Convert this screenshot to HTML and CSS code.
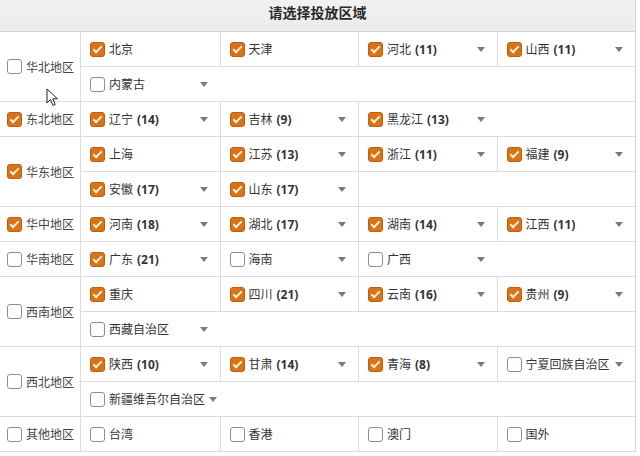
FILE: index.html
```html
<!DOCTYPE html>
<html lang="zh">
<head>
<meta charset="utf-8">
<title>请选择投放区域</title>
<link rel="stylesheet" href="styles.css">
</head>
<body>
<div class="panel">
  <div class="title">请选择投放区域</div>

  <div class="group">
    <div class="region"><span class="cb"></span>华北地区</div>
    <div class="rows">
      <div class="row">
        <div class="cell"><span class="cb on"></span>北京</div>
        <div class="cell"><span class="cb on"></span>天津</div>
        <div class="cell"><span class="cb on"></span>河北 <b>(11)</b><i class="dd"></i></div>
        <div class="cell"><span class="cb on"></span>山西 <b>(11)</b><i class="dd"></i></div>
      </div>
      <div class="row">
        <div class="cell"><span class="cb"></span>内蒙古<i class="dd"></i></div>
      </div>
    </div>
  </div>

  <div class="group">
    <div class="region"><span class="cb on"></span>东北地区</div>
    <div class="rows">
      <div class="row">
        <div class="cell"><span class="cb on"></span>辽宁 <b>(14)</b><i class="dd"></i></div>
        <div class="cell"><span class="cb on"></span>吉林 <b>(9)</b><i class="dd"></i></div>
        <div class="cell"><span class="cb on"></span>黑龙江 <b>(13)</b><i class="dd"></i></div>
      </div>
    </div>
  </div>

  <div class="group">
    <div class="region"><span class="cb on"></span>华东地区</div>
    <div class="rows">
      <div class="row">
        <div class="cell"><span class="cb on"></span>上海</div>
        <div class="cell"><span class="cb on"></span>江苏 <b>(13)</b><i class="dd"></i></div>
        <div class="cell"><span class="cb on"></span>浙江 <b>(11)</b><i class="dd"></i></div>
        <div class="cell"><span class="cb on"></span>福建 <b>(9)</b><i class="dd"></i></div>
      </div>
      <div class="row">
        <div class="cell"><span class="cb on"></span>安徽 <b>(17)</b><i class="dd"></i></div>
        <div class="cell"><span class="cb on"></span>山东 <b>(17)</b><i class="dd"></i></div>
        <div class="cell"></div>
      </div>
    </div>
  </div>

  <div class="group">
    <div class="region"><span class="cb on"></span>华中地区</div>
    <div class="rows">
      <div class="row">
        <div class="cell"><span class="cb on"></span>河南 <b>(18)</b><i class="dd"></i></div>
        <div class="cell"><span class="cb on"></span>湖北 <b>(17)</b><i class="dd"></i></div>
        <div class="cell"><span class="cb on"></span>湖南 <b>(14)</b><i class="dd"></i></div>
        <div class="cell"><span class="cb on"></span>江西 <b>(11)</b><i class="dd"></i></div>
      </div>
    </div>
  </div>

  <div class="group">
    <div class="region"><span class="cb"></span>华南地区</div>
    <div class="rows">
      <div class="row">
        <div class="cell"><span class="cb on"></span>广东 <b>(21)</b><i class="dd"></i></div>
        <div class="cell"><span class="cb"></span>海南<i class="dd"></i></div>
        <div class="cell"><span class="cb"></span>广西<i class="dd"></i></div>
      </div>
    </div>
  </div>

  <div class="group">
    <div class="region"><span class="cb"></span>西南地区</div>
    <div class="rows">
      <div class="row">
        <div class="cell"><span class="cb on"></span>重庆</div>
        <div class="cell"><span class="cb on"></span>四川 <b>(21)</b><i class="dd"></i></div>
        <div class="cell"><span class="cb on"></span>云南 <b>(16)</b><i class="dd"></i></div>
        <div class="cell"><span class="cb on"></span>贵州 <b>(9)</b><i class="dd"></i></div>
      </div>
      <div class="row">
        <div class="cell"><span class="cb"></span>西藏自治区<i class="dd"></i></div>
      </div>
    </div>
  </div>

  <div class="group">
    <div class="region"><span class="cb"></span>西北地区</div>
    <div class="rows">
      <div class="row">
        <div class="cell"><span class="cb on"></span>陕西 <b>(10)</b><i class="dd"></i></div>
        <div class="cell"><span class="cb on"></span>甘肃 <b>(14)</b><i class="dd"></i></div>
        <div class="cell"><span class="cb on"></span>青海 <b>(8)</b><i class="dd"></i></div>
        <div class="cell"><span class="cb"></span>宁夏回族自治区<i class="dd"></i></div>
      </div>
      <div class="row">
        <div class="cell tight"><span class="cb"></span>新疆维吾尔自治区<i class="dd"></i></div>
      </div>
    </div>
  </div>

  <div class="group">
    <div class="region"><span class="cb"></span>其他地区</div>
    <div class="rows">
      <div class="row">
        <div class="cell"><span class="cb"></span>台湾</div>
        <div class="cell"><span class="cb"></span>香港</div>
        <div class="cell"><span class="cb"></span>澳门</div>
        <div class="cell"><span class="cb"></span>国外</div>
      </div>
    </div>
  </div>

  <svg class="cursor" width="14" height="20" viewBox="0 0 14 20">
    <path d="M1 1 L1 15 L4.5 11.5 L7 17.5 L9.2 16.6 L6.8 10.8 L11.5 10.8 Z" fill="#fff" stroke="#222" stroke-width="1" stroke-linejoin="round"/>
  </svg>
</div>
</body>
</html>
```

FILE: styles.css
```css
html, body {
  margin: 0;
  padding: 0;
  background: #ffffff;
}

.panel {
  position: relative;
  width: 635px;
  border-right: 1px solid #d6d6d6;
  font-family: "Noto Sans", "Noto Sans CJK SC", sans-serif;
  font-size: 12px;
  color: #333;
  background: #fff;
}

.title {
  height: 31px;
  line-height: 25px;
  text-align: center;
  font-family: "Noto Sans CJK SC", sans-serif;
  font-weight: bold;
  font-size: 14px;
  color: #2a2a2a;
  background: linear-gradient(#f1f1f1, #ebebeb);
  border-bottom: 1px solid #d4d4d4;
}

.group {
  display: flex;
  border-bottom: 1px solid #dcdcdc;
}

.group:last-of-type {
  border-bottom: 1px solid #dcdcdc;
}

.region {
  width: 81px;
  flex: none;
  display: flex;
  align-items: center;
  gap: 4px;
  padding-left: 7px;
  box-sizing: border-box;
  border-right: 1px solid #dcdcdc;
  color: #444;
  white-space: nowrap;
}

.rows {
  flex: 1;
  display: flex;
  flex-direction: column;
}

.row {
  height: 35px;
  box-sizing: border-box;
  display: grid;
  grid-template-columns: repeat(4, 1fr);
  border-bottom: 1px solid #dcdcdc;
}

.row:last-child {
  height: 34px;
  border-bottom: none;
}

.cell {
  display: flex;
  align-items: center;
  padding-left: 9px;
  white-space: nowrap;
  border-left: 1px solid #dcdcdc;
  min-width: 0;
}

.cell:first-child {
  border-left: none;
}

.cell b {
  font-weight: bold;
  margin-left: 4px;
  color: #333;
}

.cb {
  position: relative;
  flex: none;
  width: 13px;
  height: 13px;
  margin-right: 4px;
  border: 1px solid #8e8e8e;
  border-radius: 3px;
  background: #fff;
}

.region .cb {
  margin-right: 0;
}

.cb.on {
  background: #d8731a;
  border-color: #bf5f0d;
}

.cb.on::after {
  content: "";
  position: absolute;
  left: 4px;
  top: 1px;
  width: 3px;
  height: 7px;
  border: solid #fff0d6;
  border-width: 0 2px 2px 0;
  transform: rotate(45deg);
}

.dd {
  flex: none;
  width: 0;
  height: 0;
  margin-left: auto;
  margin-right: 12px;
  border-left: 4.5px solid transparent;
  border-right: 4.5px solid transparent;
  border-top: 5px solid #7a7a7a;
}

.tight .dd {
  margin-left: 4px;
  margin-right: 0;
}

.cursor {
  position: absolute;
  left: 46px;
  top: 88px;
}
```
